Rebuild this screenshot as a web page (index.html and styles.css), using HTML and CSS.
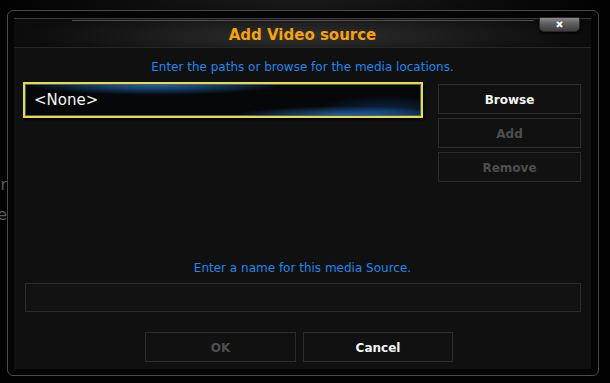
FILE: index.html
```html
<!DOCTYPE html>
<html lang="en">
<head>
  <meta charset="UTF-8">
  <title>Add Video source</title>
  <link rel="stylesheet" href="styles.css">
</head>
<body>
  <!-- library list behind the dialog -->
  <div class="backdrop">
    <span>Files folder</span>
    <span>Add source</span>
  </div>

  <div class="dialog">
    <div class="panel">
      <div class="title-bar"><h1>Add Video source</h1></div>
      <button class="close" type="button">&#x2716;</button>

      <p class="hint">Enter the paths or browse for the media locations.</p>

      <div class="paths">
        <div class="path-list">
          <div class="path-item">&lt;None&gt;</div>
        </div>
        <div class="side-buttons">
          <button class="btn" type="button">Browse</button>
          <button class="btn off" type="button">Add</button>
          <button class="btn off" type="button">Remove</button>
        </div>
      </div>

      <p class="hint name-hint">Enter a name for this media Source.</p>
      <div class="name-box"></div>

      <div class="actions">
        <button class="btn off" type="button">OK</button>
        <button class="btn" type="button">Cancel</button>
      </div>
    </div>
  </div>
</body>
</html>
```

FILE: styles.css
```css
*{margin: 0; padding: 0; box-sizing: border-box; font-family: "DejaVu Sans", "Liberation Sans", sans-serif;}

html,body{
  width: 100%;
  height: 100%;
}
body{
  background: radial-gradient(ellipse 300px 40px at 300px 0px, #1a1a1a, transparent), #020202;
  position: relative;
  overflow: hidden;
}

.backdrop{
  position: absolute;
  top: 176px;
  right: 603px;
  display: flex;
  flex-direction: column;
  align-items: flex-end;
  gap: 12px;
  color: #5a5a5a;
  font-size: 16px;
  line-height: 18px;
  white-space: nowrap;
}

.dialog{
  position: absolute;
  left: 7px;
  top: 10px;
  width: 592px;
  height: 366px;
  border: 1px solid #4a4a4a;
  border-radius: 6px;
  background: #040404;
  padding: 7px 7px 6px 6px;
}
.panel{
  position: relative;
  height: 100%;
  background: #101010;
  display: flex;
  flex-direction: column;
}

.title-bar{
  height: 30px;
  border-top: 1px solid #3c3c3c;
  border-bottom: 1px solid #262626;
  background:
    linear-gradient(#505050, #505050) center 1px / 80% 1px no-repeat,
    radial-gradient(ellipse 280px 28px at center 60%, #303030, #161616 70%, #0c0c0c);
  display: flex;
  align-items: center;
  justify-content: center;
}
.title-bar h1{
  color: #f5a20e;
  font-size: 15px;
  font-weight: bold;
  margin-top: 3px;
}

.close{
  position: absolute;
  left: 525px;
  top: -1px;
  width: 41px;
  height: 15px;
  border: 1px solid #2a2a2a;
  border-radius: 0 0 5px 5px;
  background: linear-gradient(#8a8a8a, #5c5c5c 45%, #3e3e3e);
  box-shadow: 0 1px 3px #000;
  color: #f2f2f2;
  font-size: 10px;
  line-height: 12px;
  text-shadow: 0 0 1px #000;
}

.hint{
  margin-top: 11px;
  height: 16px;
  line-height: 16px;
  text-align: center;
  color: #1e88ee;
  font-size: 12px;
}

.paths{
  margin-top: 7px;
  height: 100px;
  display: flex;
  gap: 15px;
  padding-left: 9px;
}
.path-list{
  width: 400px;
}
.path-item{
  height: 36px;
  border: 2px solid #e4df3c;
  box-shadow: inset 0 0 0 1px #4b5a6c, 1px 2px 2px #000;
  background:
    radial-gradient(ellipse 130px 11px at 130px 0px, rgba(38, 118, 205, 0.9), transparent),
    radial-gradient(ellipse 110px 10px at 320px 100%, rgba(38, 118, 205, 0.85), transparent),
    radial-gradient(ellipse 70px 16px at 360px 85%, rgba(20, 70, 140, 0.5), transparent),
    #060708;
  color: #f4f4f4;
  font-size: 15px;
  line-height: 32px;
  padding-left: 9px;
}

.side-buttons{
  width: 143px;
  margin-top: 2px;
  display: flex;
  flex-direction: column;
  gap: 4px;
}

.btn{
  height: 30px;
  padding-top: 2px;
  background: #111;
  border: 1px solid #2b2b2b;
  color: #f4f4f4;
  font-size: 12px;
  font-weight: bold;
}
.btn.off{
  color: #4e4e4e;
}

.name-hint{
  margin-top: 78px;
}
.name-box{
  margin: 7px 10px 0 11px;
  height: 29px;
  background: #121212;
  border: 1px solid #2b2b2b;
}

.actions{
  margin-top: 20px;
  display: flex;
  justify-content: center;
  gap: 7px;
  padding-right: 7px;
}
.actions .btn{
  width: 151px;
}
.actions .btn:last-child{
  width: 150px;
}
```
